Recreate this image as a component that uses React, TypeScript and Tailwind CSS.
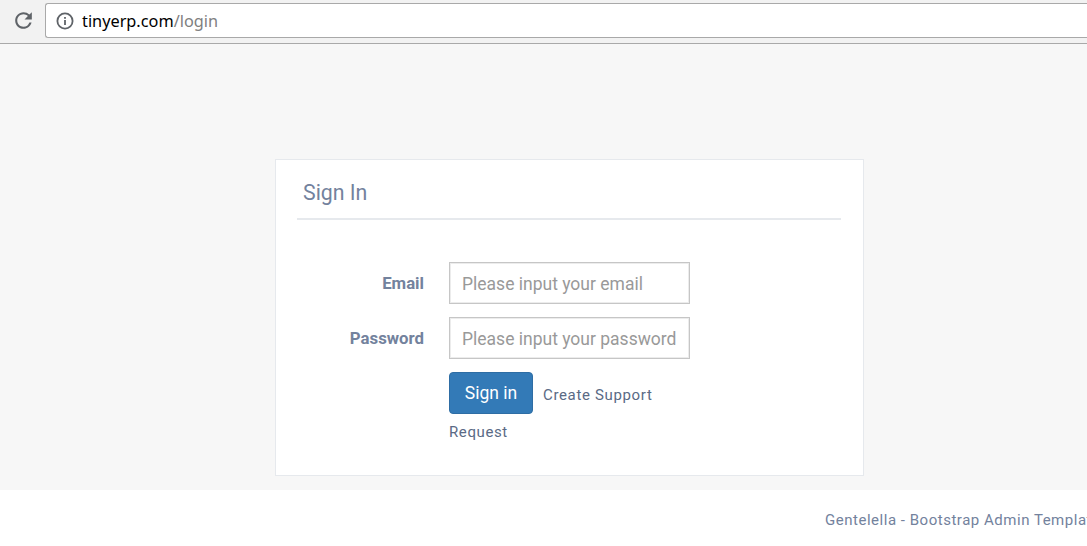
function ReloadIcon() {
  return (
    <svg width="25" height="25" viewBox="0 0 24 24" fill="#5f6368">
      <path d="M17.65 6.35A7.958 7.958 0 0 0 12 4c-4.42 0-7.99 3.58-7.99 8s3.57 8 7.99 8c3.73 0 6.84-2.55 7.73-6h-2.08A5.99 5.99 0 0 1 12 18c-3.31 0-6-2.69-6-6s2.69-6 6-6c1.66 0 3.14.69 4.22 1.78L13 11h7V4l-2.35 2.35z" />
    </svg>
  );
}

function InfoIcon() {
  return (
    <svg width="18" height="18" viewBox="0 0 18 18" fill="none" className="shrink-0">
      <circle cx="9" cy="9" r="7.6" stroke="#5f6368" strokeWidth="1.8" />
      <rect x="8.1" y="8" width="1.8" height="5" fill="#5f6368" />
      <rect x="8.1" y="5" width="1.8" height="1.8" fill="#5f6368" />
    </svg>
  );
}

function BrowserBar() {
  return (
    <div className="flex h-[44px] shrink-0 items-start border-b border-[#a9a9a9] bg-[#f2f2f2] pt-[3px]">
      <div className="flex h-[35px] w-[45px] shrink-0 items-center justify-center pl-[2px]">
        <ReloadIcon />
      </div>
      <div className="flex h-[35px] flex-1 items-center rounded-l-[3px] border border-r-0 border-[#a9a9a9] bg-white pl-[10px]">
        <InfoIcon />
        <span className="ml-[8px] pt-[1px] font-['Noto_Sans',sans-serif] text-[16.3px] text-black">
          tinyerp.com<span className="text-[#808080]">/login</span>
        </span>
      </div>
    </div>
  );
}

function Field({ label, placeholder, type }: { label: string; placeholder: string; type: string }) {
  return (
    <div className="flex items-center">
      <label className="w-[127px] pt-[2px] text-right text-[16.8px] font-bold text-[#73829d]">{label}</label>
      <input
        type={type}
        placeholder={placeholder}
        className="ml-[25px] h-[42px] w-[241px] border border-[#c6c6c6] bg-white pl-[12px] pr-0 pt-[2px] text-[17.5px] shadow-[inset_0_0_0_1px_#ececec] outline-none placeholder:text-[#999999]"
      />
    </div>
  );
}

export default function App() {
  return (
    <div className="flex h-[546px] w-[1087px] flex-col overflow-hidden bg-white font-['Roboto',sans-serif]">
      <BrowserBar />
      <main className="flex h-[446px] shrink-0 flex-col items-center bg-[#f7f7f7] pl-[52px] pt-[115px]">
        <div className="h-[317px] w-[589px] border border-[#e6e9ed] bg-white pl-[21px] pr-[22px] pt-[10px]">
          <h2 className="h-[50px] border-b-2 border-[#e6e9ed] pl-[6px] pt-[11px] text-[21.3px] leading-[24px] text-[#73829d]">
            Sign In
          </h2>
          <div className="mt-[42px] flex flex-col gap-[13px]">
            <Field label="Email" placeholder="Please input your email" type="email" />
            <Field label="Password" placeholder="Please input your password" type="password" />
          </div>
          <div className="ml-[152px] mt-[13px] w-[241px]">
            <div className="flex items-center">
              <button className="h-[42px] w-[84px] rounded-[4px] border border-[#2e6da4] bg-[#337ab7] text-[17.5px] text-white">
                Sign in
              </button>
              <a className="ml-[10px] mt-[4px] text-[15px] tracking-[0.65px] text-[#5a6a85]">Create Support</a>
            </div>
            <a className="mt-[9px] block text-[15px] leading-[18px] tracking-[0.6px] text-[#5a6a85]">Request</a>
          </div>
        </div>
      </main>
      <footer className="flex flex-1 justify-start bg-white pl-[825px] pt-[21px]">
        <span className="whitespace-nowrap text-[15px] leading-[18px] tracking-[0.52px] text-[#73829d]">
          Gentelella - Bootstrap Admin Template
        </span>
      </footer>
    </div>
  );
}
